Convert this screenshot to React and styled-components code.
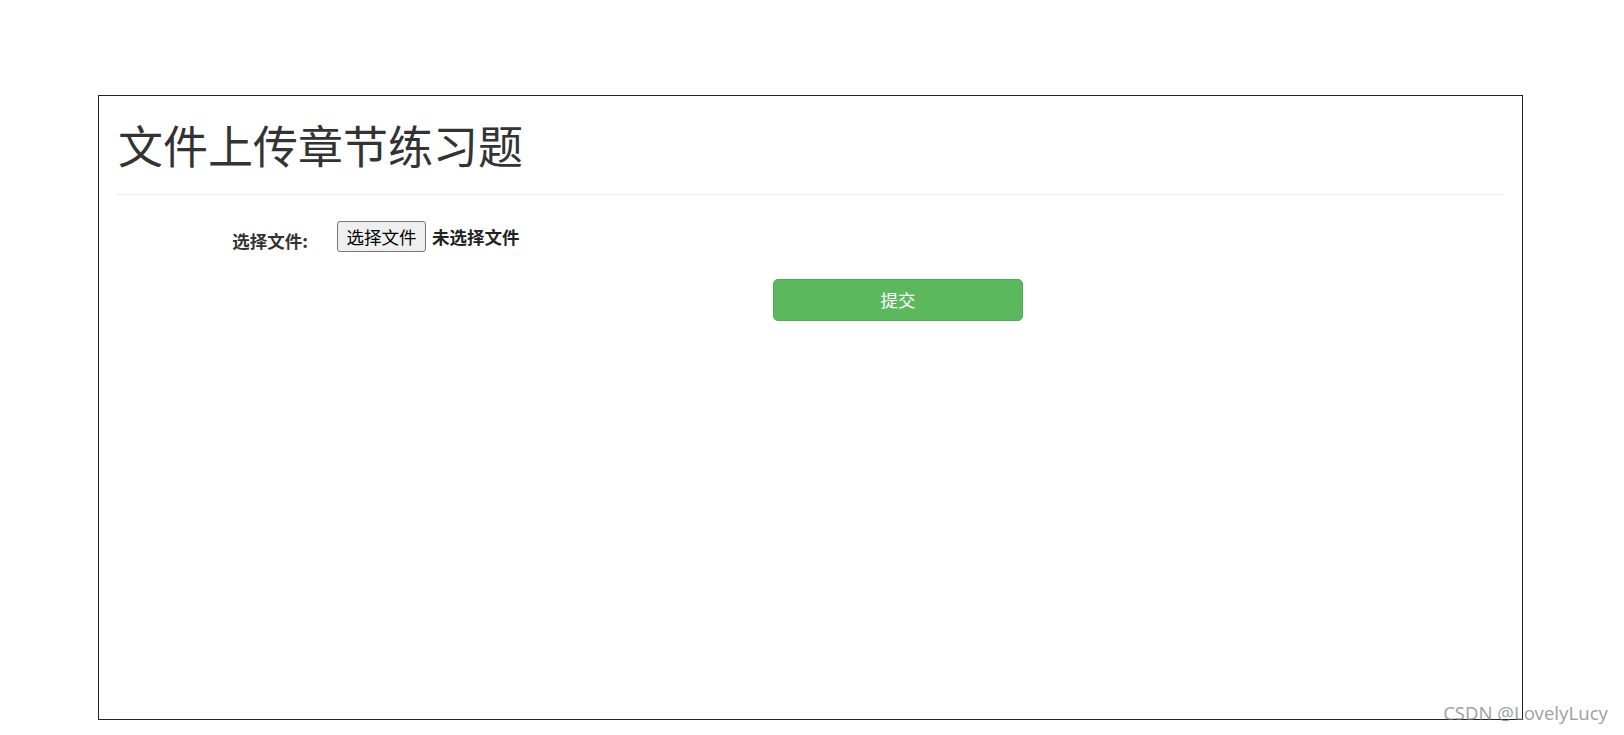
import React from 'react';
import styled, { createGlobalStyle } from 'styled-components';

const GlobalStyle = createGlobalStyle`
    html, body {
        margin: 0;
        padding: 0;
        background: #fff;
    }
    body {
        font-family: "Noto Sans CJK SC", "Noto Sans", sans-serif;
        font-size: 17.5px;
        line-height: 1.42857;
        color: #333;
    }
`;

const App = () => {
    return (
        <>
            <GlobalStyle />
            <Page>
                <Panel>
                    <Header>
                        <h1>文件上传章节练习题</h1>
                    </Header>
                    <FormRow>
                        <FieldLabel>选择文件:</FieldLabel>
                        <FilePicker>
                            <HiddenInput type="file" />
                            <PickButton>选择文件</PickButton>
                            <FileStatus>未选择文件</FileStatus>
                        </FilePicker>
                    </FormRow>
                    <SubmitRow>
                        <SubmitButton type="button">提交</SubmitButton>
                    </SubmitRow>
                </Panel>
                <Watermark>CSDN @LovelyLucy</Watermark>
            </Page>
        </>
    );
};

const Page = styled.div`
    position: relative;
    width: 1624px;
    height: 735px;
    padding: 95px 0 0 98px;
    box-sizing: border-box;
`;

const Panel = styled.div`
    width: 1425px;
    height: 625px;
    box-sizing: border-box;
    border: 1px solid #222;
    padding: 0 18px;
`;

const Header = styled.div`
    padding: 24px 0 24px;
    border-bottom: 1px solid #eee;

    h1 {
        margin: 0;
        padding-left: 1px;
        font-size: 45px;
        line-height: 49.5px;
        font-weight: 400;
        color: #333;
    }
`;

const FormRow = styled.div`
    display: flex;
    align-items: flex-start;
    gap: 29px;
    margin-top: 26px;
`;

const FieldLabel = styled.label`
    width: 191px;
    text-align: right;
    padding-top: 7px;
    font-weight: 700;
    line-height: 25px;
`;

const FilePicker = styled.label`
    display: inline-flex;
    align-items: center;
    gap: 6px;
    height: 31px;
    cursor: pointer;
`;

const HiddenInput = styled.input`
    display: none;
`;

const PickButton = styled.span`
    display: inline-flex;
    align-items: center;
    justify-content: center;
    width: 89px;
    height: 31px;
    box-sizing: border-box;
    border: 1px solid #767676;
    border-radius: 3px;
    background: #efefef;
    color: #000;
    font-size: 17.5px;
    font-weight: 400;
`;

const FileStatus = styled.span`
    font-weight: 700;
    color: #222;
`;

const SubmitRow = styled.div`
    margin-top: 26px;
    padding-left: 656px;
`;

const SubmitButton = styled.button`
    width: 250px;
    height: 42px;
    box-sizing: border-box;
    background: #5cb85c;
    border: 1px solid #4cae4c;
    border-radius: 5px;
    color: #fff;
    font-family: "Noto Sans CJK SC", "Noto Sans", sans-serif;
    font-size: 17.5px;
    font-weight: 400;
    cursor: pointer;
`;

const Watermark = styled.div`
    position: absolute;
    right: 16px;
    bottom: 9px;
    font-family: "Noto Sans", "Noto Sans CJK SC", sans-serif;
    font-size: 18.5px;
    color: rgba(120, 120, 120, 0.7);
    pointer-events: none;
`;

export default App;
